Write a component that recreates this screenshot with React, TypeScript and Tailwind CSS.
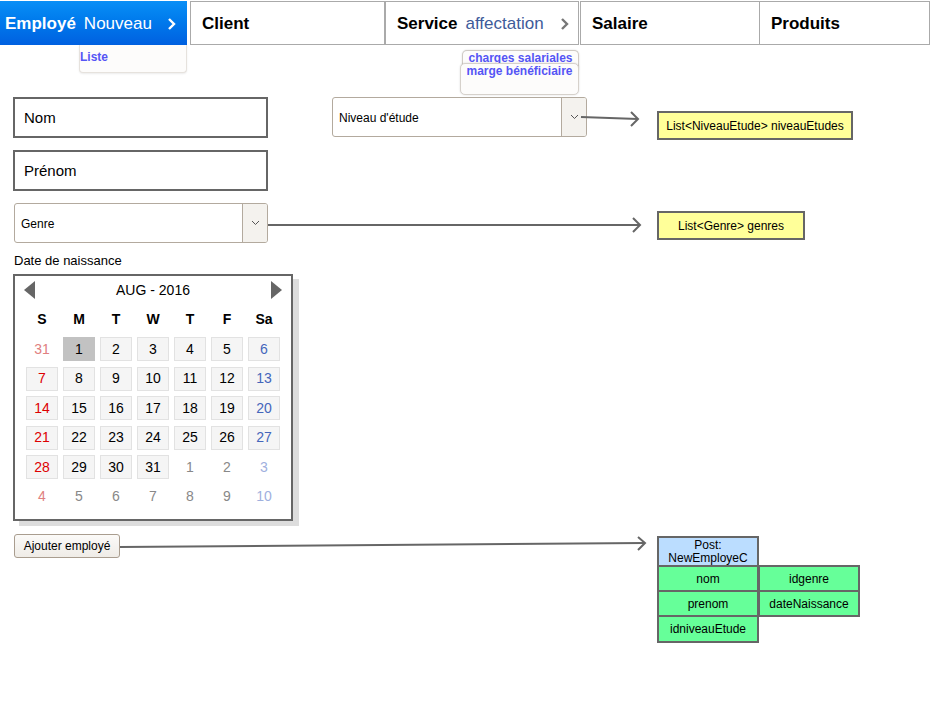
import { ReactNode } from 'react'

const FONT = { fontFamily: '"Liberation Sans", Arial, sans-serif' }

function Chevron({ className = '' }: { className?: string }) {
  return (
    <svg width="9" height="14" viewBox="0 0 9 14" className={className}>
      <path d="M2 2 L7 7 L2 12" fill="none" stroke="currentColor" strokeWidth="2.4" />
    </svg>
  )
}

function SelectBox({ label, className = '' }: { label: string; className?: string }) {
  return (
    <div className={`flex h-[40px] rounded-[3px] border border-[#b3aa9e] bg-white overflow-hidden ${className}`}>
      <div className="flex-1 flex items-center pl-[6px] pt-px text-[12px] text-black">{label}</div>
      <div className="w-[25px] flex items-center justify-center border-l border-[#b3aa9e] bg-[#f4f2ee]">
        <svg width="9" height="6" viewBox="0 0 9 6">
          <path d="M1 1 L4.5 4.5 L8 1" fill="none" stroke="#555" strokeWidth="1" />
        </svg>
      </div>
    </div>
  )
}

function Note({ children, className = '' }: { children: ReactNode; className?: string }) {
  return (
    <div className={`absolute flex items-center justify-center border-2 border-[#666] bg-[#ffff99] text-[12px] text-black ${className}`}>
      {children}
    </div>
  )
}

type Day = { n: number; cur: boolean }

function buildDays(): Day[] {
  const days: Day[] = [{ n: 31, cur: false }]
  for (let i = 1; i <= 31; i++) days.push({ n: i, cur: true })
  for (let i = 1; i <= 10; i++) days.push({ n: i, cur: false })
  return days
}

function dayColor(col: number, cur: boolean) {
  if (cur) {
    if (col === 0) return 'text-[#dd0000]'
    if (col === 6) return 'text-[#4466bb]'
    return 'text-black'
  }
  if (col === 0) return 'text-[#e08080]'
  if (col === 6) return 'text-[#9fb0de]'
  return 'text-[#888]'
}

function Calendar() {
  const days = buildDays()
  const heads = ['S', 'M', 'T', 'W', 'T', 'F', 'Sa']
  return (
    <div className="w-[280px] h-[247px] border-2 border-[#666] bg-white shadow-[6px_5px_0_#dddddd] pt-[3px] px-[9px]">
      <div className="flex h-[22px] items-center justify-between">
        <svg width="11" height="18" viewBox="0 0 11 18">
          <path d="M11 0 L0 9 L11 18 Z" fill="#666" />
        </svg>
        <span className="text-[14px] text-black">AUG - 2016</span>
        <svg width="11" height="18" viewBox="0 0 11 18">
          <path d="M0 0 L11 9 L0 18 Z" fill="#666" />
        </svg>
      </div>
      <div className="mt-[6px] grid grid-cols-[repeat(7,32px)] gap-x-[5px] pl-[2px]">
        {heads.map((h, i) => (
          <div key={i} className="h-[24px] flex items-center justify-center text-[14px] font-bold text-black">
            {h}
          </div>
        ))}
      </div>
      <div className="mt-[6px] grid grid-cols-[repeat(7,32px)] gap-x-[5px] gap-y-[5.6px] pl-[2px]">
        {days.map((d, i) => {
          const col = i % 7
          const selected = d.cur && d.n === 1
          const bg = !d.cur ? '' : selected ? 'bg-[#c2c2c2] border border-[#c2c2c2]' : 'bg-[#f5f5f5] border border-[#e2e2e2]'
          return (
            <div
              key={i}
              className={`h-[24px] flex items-center justify-center text-[14px] ${bg} ${dayColor(col, d.cur)}`}
            >
              {d.n}
            </div>
          )
        })}
      </div>
    </div>
  )
}

function Field({ label, className = '' }: { label: string; className?: string }) {
  return (
    <div className={`w-[255px] h-[41px] border-2 border-[#666] bg-white flex items-center pl-[9px] pt-[2px] text-[15px] text-black ${className}`}>
      {label}
    </div>
  )
}

function Cell({ children, className = '' }: { children: ReactNode; className?: string }) {
  return (
    <div className={`absolute flex items-center justify-center border-2 border-[#666] bg-[#66ff99] text-[12px] text-black ${className}`}>
      {children}
    </div>
  )
}

export default function App() {
  return (
    <div className="relative w-[930px] h-[716px] bg-white overflow-hidden" style={FONT}>
      {/* Tabs */}
      <div className="flex h-[45px] pt-px">
        <div className="relative w-[187px] flex items-center pt-px bg-gradient-to-b from-[#0a8ff6] to-[#0060e0] text-white text-[17px]">
          <span className="pl-[5px] font-bold">Employé</span>
          <span className="ml-[8px]">Nouveau</span>
          <Chevron className="ml-auto mr-[11px] text-white" />
          <div className="absolute left-[79px] top-[44px] w-[108px] h-[28px] bg-[#fdfcfb] border border-t-0 border-[#e6e2dd] rounded-b-[4px] shadow-[0_1px_2px_rgba(0,0,0,0.08)]">
            <span className="block text-[12px] font-bold text-[#5555f5] leading-[14px] pt-[5px]">Liste</span>
          </div>
        </div>
        <div className="ml-[3px] w-[195px] flex items-center pt-px border border-[#aaa] pl-[11px] text-[17px] font-bold text-black">
          Client
        </div>
        <div className="relative w-[194px] flex items-center pt-px border border-[#aaa] pl-[11px] text-[17px] text-black">
          <span className="font-bold">Service</span>
          <span className="ml-[8px] text-[#3e5b9a]">affectation</span>
          <Chevron className="ml-auto mr-[9px] text-[#777]" />
          <div className="absolute left-[76px] top-[48px] w-[117px] h-[20px] rounded-t-[5px] border border-b-0 border-[#cfcac4] bg-[#fdfcfb] shadow-[0_0_2px_rgba(0,0,0,0.15)] text-center text-[12px] font-bold text-[#5555f5] leading-[14px]">
            charges salariales
          </div>
          <div className="absolute left-[74px] top-[61px] w-[119px] h-[32px] rounded-[5px] border border-[#d6d1cb] bg-[#fdfcfb] shadow-[0_0_2px_rgba(0,0,0,0.15)] text-center text-[12px] font-bold text-[#5555f5] leading-[14px]">
            marge bénéficiaire
          </div>
        </div>
        <div className="ml-px w-[180px] flex items-center pt-px border border-[#aaa] pl-[11px] text-[17px] font-bold text-black">
          Salaire
        </div>
        <div className="flex-1 flex items-center pt-px border border-l-0 border-[#aaa] pl-[11px] text-[17px] font-bold text-black">
          Produits
        </div>
      </div>

      {/* Form column */}
      <div className="flex flex-col pl-[13px] pt-[52px]">
        <Field label="Nom" />
        <Field label="Prénom" className="mt-[12px]" />
        <SelectBox label="Genre" className="ml-px mt-[12px] w-[254px]" />
        <div className="ml-px mt-[10px] text-[13px] text-black leading-[15px]">Date de naissance</div>
        <div className="mt-[6px]">
          <Calendar />
        </div>
        <div className="ml-px mt-[13px] w-[106px] h-[24px] rounded-[3px] border border-[#a99d8f] bg-gradient-to-b from-[#fbfaf8] to-[#efece7] flex items-center justify-center text-[12px] text-black">
          Ajouter employé
        </div>
      </div>

      {/* Diagram */}
      <SelectBox label="Niveau d'étude" className="absolute left-[332px] top-[97px] w-[255px]" />
      <Note className="left-[657px] top-[111px] w-[196px] h-[29px]">List&lt;NiveauEtude&gt; niveauEtudes</Note>
      <Note className="left-[657px] top-[211px] w-[148px] h-[29px]">List&lt;Genre&gt; genres</Note>

      <div className="absolute left-[657px] top-[536px] w-[102px] h-[31px] border-2 border-[#666] bg-[#bbddff] flex flex-col items-center justify-center text-[12px] leading-[13px] text-black">
        <span>Post:</span>
        <span>NewEmployeC</span>
      </div>
      <Cell className="left-[657px] top-[565px] w-[102px] h-[27px]">nom</Cell>
      <Cell className="left-[758px] top-[565px] w-[102px] h-[27px]">idgenre</Cell>
      <Cell className="left-[657px] top-[590px] w-[102px] h-[27px]">prenom</Cell>
      <Cell className="left-[758px] top-[590px] w-[102px] h-[27px]">dateNaissance</Cell>
      <Cell className="left-[657px] top-[615px] w-[102px] h-[28px]">idniveauEtude</Cell>

      <svg className="absolute inset-0 pointer-events-none" width="930" height="716">
        <g fill="none" stroke="#666" strokeWidth="2">
          <path d="M581 117 L638 119" />
          <path d="M631 112 L638 119 L631 126" />
          <path d="M268 225 L640 225" />
          <path d="M633 218 L640 225 L633 232" />
          <path d="M120 547 L645 543" />
          <path d="M638 537 L645 543 L638 550" />
        </g>
      </svg>
    </div>
  )
}
